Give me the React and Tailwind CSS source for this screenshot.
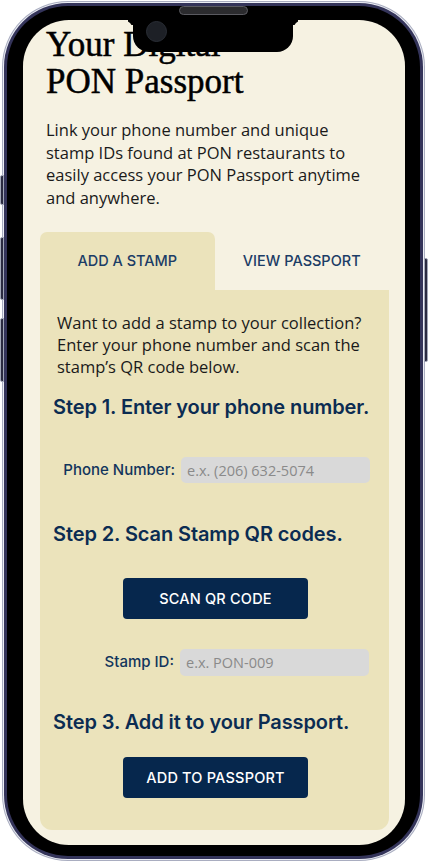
import React from "react";

const heading = "font-['Inter',sans-serif] font-semibold text-[20px] leading-[28px] text-[#0b2c52] tracking-[-0.1px]";
const label = "font-['Inter',sans-serif] font-medium text-[15px] text-[#12355c]";
const inputCls = "w-[189px] rounded-[5px] bg-[#d9d9d9] px-[6px] font-['Open_Sans',sans-serif] text-[14.5px] text-[#333] placeholder:text-[#8a8a8a] outline-none";
const btn = "w-[185px] h-[41px] rounded-[4px] bg-[#06274d] text-white font-['Inter',sans-serif] font-medium text-[14.5px] tracking-[0.2px] flex items-center justify-center";

export default function App() {
  return (
    <div className="relative w-[428px] h-[865px] bg-white overflow-hidden">
      {/* side buttons */}
      <div className="absolute left-0 top-[175px] w-[4px] h-[30px] rounded-l-[2px] bg-[#2a2a40] border border-[#a3a7b8]" />
      <div className="absolute left-0 top-[237px] w-[4px] h-[63px] rounded-l-[2px] bg-[#2a2a40] border border-[#a3a7b8]" />
      <div className="absolute left-0 top-[318px] w-[4px] h-[64px] rounded-l-[2px] bg-[#2a2a40] border border-[#a3a7b8]" />
      <div className="absolute right-0 top-[258px] w-[4px] h-[104px] rounded-r-[2px] bg-[#2a2a40] border border-[#a3a7b8]" />

      <div className="ml-[2px] mt-[1px] w-[423px] h-[860px] rounded-[66px] bg-[#a9adc0] p-px">
        <div className="w-full h-full rounded-[65px] bg-[#eceef4] p-px">
          <div className="w-full h-full rounded-[64px] bg-[#34345a] p-[3px]">
            <div className="relative w-full h-full rounded-[61px] bg-black pt-[14px] pb-[11px] pl-[16px] pr-[15px]">
              {/* speaker */}
              <div className="absolute left-[172px] top-[0px] w-[69px] h-[9px] rounded-full bg-[#2b2b2e] border border-[#5a5a60]" />
              <div className="relative w-full h-full rounded-[46px] bg-[#f6f2e2] overflow-hidden">
                {/* notch */}
                <div className="absolute left-[110px] top-0 w-[160px] h-[32px] bg-black rounded-b-[16px] z-10">
                  <div className="absolute left-[-10px] top-0 w-[10px] h-[10px] rounded-tr-[10px] shadow-[5px_-5px_0_0_#000]" />
                  <div className="absolute right-[-10px] top-0 w-[10px] h-[10px] rounded-tl-[10px] shadow-[-5px_-5px_0_0_#000]" />
                  <div className="absolute left-[13px] top-[1px] w-[21px] h-[21px] rounded-full bg-[#1d2026] border border-[#2a2e36]" />
                </div>

                <div className="px-[17px] pr-[16px] pt-[6px]">
                  <h1 className="pl-[6px] font-['Liberation_Serif',serif] text-[35px] leading-[37px] text-black [-webkit-text-stroke:0.5px_#000]">
                    Your Digital
                    <br />
                    PON Passport
                  </h1>
                  <p className="pl-[6px] pr-[14px] mt-[19px] font-['Open_Sans',sans-serif] text-[16.5px] leading-[22.5px] text-[#1a1a1a]">
                    Link your phone number and unique stamp IDs found at PON restaurants to easily access your PON Passport anytime and anywhere.
                  </p>

                  <div className="mt-[23px]">
                    <div className="flex h-[58px]">
                      <div className="flex-1 rounded-t-[7px] bg-[#ebe3bb] flex items-center justify-center font-['Inter',sans-serif] font-medium text-[14.5px] text-[#1c3d66]">
                        ADD A STAMP
                      </div>
                      <div className="flex-1 flex items-center justify-center font-['Inter',sans-serif] font-medium text-[14.5px] text-[#1c3d66]">
                        VIEW PASSPORT
                      </div>
                    </div>
                    <div className="bg-[#ebe3bb] rounded-b-[12px] pl-[13px] pr-[12px] pt-[22px] pb-[32px] flex flex-col">
                      <p className="pl-[4px] font-['Open_Sans',sans-serif] text-[16.5px] leading-[22px] text-[#1a1a1a]">
                        Want to add a stamp to your collection? Enter your phone number and scan the stamp’s QR code below.
                      </p>
                      <h2 className={`${heading} mt-[15px]`}>Step 1. Enter your phone number.</h2>
                      <div className="mt-[36px] flex items-center justify-end gap-[6px] pr-[7px]">
                        <span className={label}>Phone Number:</span>
                        <input className={`${inputCls} h-[26px]`} placeholder="e.x. (206) 632-5074" />
                      </div>
                      <h2 className={`${heading} mt-[37px]`}>Step 2. Scan Stamp QR codes.</h2>
                      <div className="mt-[30px] flex justify-center pl-[1px]">
                        <button className={btn}>SCAN QR CODE</button>
                      </div>
                      <div className="mt-[30px] flex items-center justify-end gap-[6px] pr-[8px]">
                        <span className={label}>Stamp ID:</span>
                        <input className={`${inputCls} h-[27px]`} placeholder="e.x. PON-009" />
                      </div>
                      <h2 className={`${heading} mt-[32px]`}>Step 3. Add it to your Passport.</h2>
                      <div className="mt-[21px] flex justify-center pl-[1px]">
                        <button className={btn}>ADD TO PASSPORT</button>
                      </div>
                    </div>
                  </div>
                </div>
              </div>
            </div>
          </div>
        </div>
      </div>
    </div>
  );
}
